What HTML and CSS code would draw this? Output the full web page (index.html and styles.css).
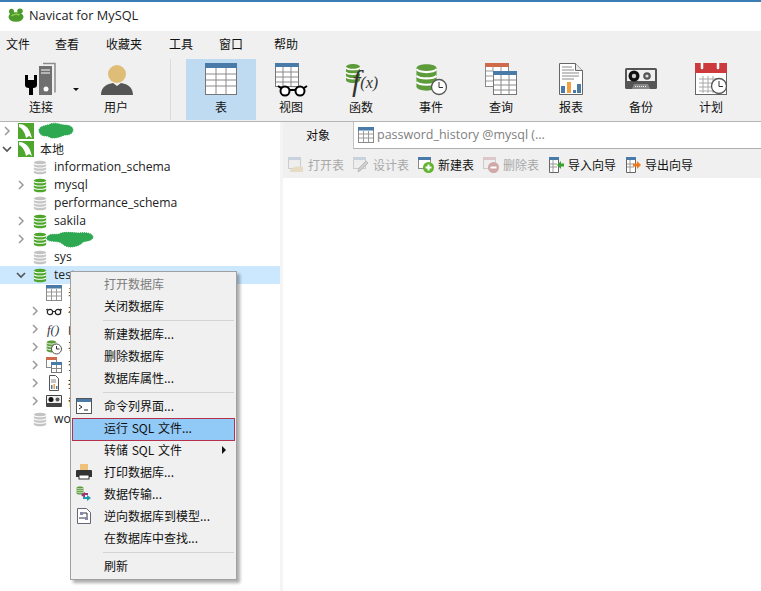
FILE: index.html
```html
<!DOCTYPE html>
<html lang="zh">
<head>
<meta charset="utf-8">
<title>Navicat for MySQL</title>
<link rel="stylesheet" href="styles.css">
</head>
<body>
<svg class="defs" aria-hidden="true">
  <symbol id="db" viewBox="0 0 16 16" preserveAspectRatio="none">
    <path d="M1 3c0-3 14-3 14 0v10c0 3-14 3-14 0z" fill="currentColor"/>
    <path d="M1 3.500c2 2 12 2 14 0M1 7c2 2 12 2 14 0M1 10.500c2 2 12 2 14 0" fill="none" stroke="#fff" stroke-width="1.200"/>
  </symbol>
  <symbol id="conn" viewBox="0 0 16 16">
    <rect width="16" height="16" fill="#4ea72c"/>
    <path d="M1 1c5 0 9 3 11 8l2 6-3-2-3 2C7 10 5 6 1 4z" fill="#fff"/>
  </symbol>
  <symbol id="chev-r" viewBox="0 0 10 10"><path d="M3 1l4 4-4 4" fill="none" stroke="#9a9a9a" stroke-width="1.500"/></symbol>
  <symbol id="chev-d" viewBox="0 0 10 10"><path d="M1 3l4 4 4-4" fill="none" stroke="#555" stroke-width="1.700"/></symbol>
  <symbol id="grid-s" viewBox="0 0 16 16">
    <rect x=".5" y=".5" width="15" height="15" fill="#fff" stroke="#8a8a8a"/>
    <rect width="16" height="3.500" fill="#4a7aa8"/>
    <path d="M1 7h14M1 11h14M5.500 4v11M10.500 4v11" stroke="#9a9a9a"/>
  </symbol>
</svg>

<div class="title-bar">
  <svg class="title-logo" viewBox="0 0 16 14"><ellipse cx="8" cy="9" rx="7.500" ry="4.800" fill="#4c9a2a"/><ellipse cx="3.500" cy="3.500" rx="2.500" ry="2.800" fill="#4c9a2a"/><ellipse cx="12" cy="3" rx="2.800" ry="2.500" fill="#4c9a2a"/><path d="M3.500 8c2-2 6-2 8-1" stroke="#8fd14f" stroke-width="1.500" fill="none"/></svg>
  <span class="title-text">Navicat for MySQL</span>
</div>

<nav class="menu-bar">
  <span>文件</span><span>查看</span><span>收藏夹</span><span>工具</span><span>窗口</span><span>帮助</span>
</nav>

<div class="toolbar">
  <div class="tool">
    <svg class="tool-icon" viewBox="0 0 44 36">
      <path d="M6 14h3v5h6v-5h3v10q0 3-4 3v7h-4v-7q-4 0-4-3z" fill="#000"/>
      <rect x="20" y="5" width="13" height="29" fill="#6f6f6f"/>
      <path d="M24 2.500h12v29" fill="none" stroke="#8a8a8a" stroke-width="1.500"/>
      <path d="M22 9h9M22 12h9" stroke="#fff"/>
      <circle cx="27" cy="28" r="2.500" fill="#fff"/>
    </svg>
    <span>连接</span>
    <i class="caret"></i>
  </div>
  <div class="tool">
    <svg class="tool-icon" viewBox="0 0 44 36">
      <circle cx="23" cy="13" r="9" fill="#e0bd77"/>
      <path d="M7 34c0-9 7-11 12-12l4 3 4-3c5 1 12 3 12 12z" fill="#555"/>
    </svg>
    <span>用户</span>
  </div>
  <div class="tool-sep"></div>
  <div class="tool is-active">
    <svg class="tool-icon" viewBox="0 0 44 36">
      <rect x="6.500" y="2.500" width="31" height="31" fill="#fff" stroke="#777"/>
      <rect x="6" y="2" width="32" height="5" fill="#4a7aa8"/>
      <path d="M7 13h30M7 19h30M7 25h30M17 7v26M27 7v26" stroke="#8a8a8a"/>
    </svg>
    <span>表</span>
  </div>
  <div class="tool">
    <svg class="tool-icon" viewBox="0 0 44 36">
      <rect x="6.500" y="2.500" width="23" height="23" fill="#fff" stroke="#777"/>
      <rect x="6" y="2" width="24" height="4" fill="#4a7aa8"/>
      <path d="M7 11h22M7 16h22M7 21h22M14 6v19M22 6v19" stroke="#8a8a8a"/>
      <circle cx="16" cy="30" r="4.500" fill="#fff" stroke="#000" stroke-width="2"/>
      <circle cx="31" cy="30" r="4.500" fill="#fff" stroke="#000" stroke-width="2"/>
      <path d="M9 25l3 2M20 29h7M35 27l3-2" stroke="#000" stroke-width="2"/>
    </svg>
    <span>视图</span>
  </div>
  <div class="tool">
    <svg class="tool-icon tone-green" viewBox="0 0 44 36">
      <use href="#db" x="6" y="2" width="16" height="21"/>
      <text class="fx" x="13" y="30">f<tspan class="fx-sub" dy="-3">(x)</tspan></text>
    </svg>
    <span>函数</span>
  </div>
  <div class="tool">
    <svg class="tool-icon tone-green" viewBox="0 0 44 36">
      <use href="#db" x="6" y="2" width="23" height="29"/>
      <circle cx="30" cy="26" r="7.500" fill="#fff" stroke="#555" stroke-width="1.300"/>
      <path d="M30 21v5.500h4" fill="none" stroke="#333"/>
    </svg>
    <span>事件</span>
  </div>
  <div class="tool">
    <svg class="tool-icon" viewBox="0 0 44 36">
      <rect x="6.500" y="2.500" width="23" height="23" fill="#fff" stroke="#888"/>
      <rect x="6" y="2" width="24" height="4" fill="#cf6a4c"/>
      <path d="M7 10h7M7 15h7M7 20h7" stroke="#999"/>
      <path d="M14 6v4" stroke="#999"/><path d="M22 6v4" stroke="#999"/>
      <rect x="14.500" y="10.500" width="23" height="23" fill="#fff" stroke="#777"/>
      <rect x="14" y="10" width="24" height="4" fill="#4a7aa8"/>
      <path d="M15 19h22M15 24h22M15 29h22M22 14v19M30 14v19" stroke="#8a8a8a"/>
    </svg>
    <span>查询</span>
  </div>
  <div class="tool">
    <svg class="tool-icon" viewBox="0 0 44 36">
      <path d="M10.500 2.500h16l7 7v24h-23z" fill="#fff" stroke="#666"/>
      <path d="M26.500 2.500v7h7" fill="#e8e8e8" stroke="#666"/>
      <path d="M13 6h10M13 9h12M13 12h17M13 15h17M13 18h12" stroke="#888"/>
      <rect x="12" y="25" width="4" height="7" fill="#4a7aa8"/>
      <rect x="18" y="21" width="4" height="11" fill="#f0a040"/>
      <rect x="24" y="29" width="3" height="3" fill="#4a7aa8"/>
      <rect x="28" y="23" width="4" height="9" fill="#4a7aa8"/>
    </svg>
    <span>报表</span>
  </div>
  <div class="tool">
    <svg class="tool-icon" viewBox="0 0 44 36">
      <rect x="6" y="7" width="32" height="21" rx="1.500" fill="#555"/>
      <rect x="8" y="9" width="28" height="11" fill="#f0f0f0"/>
      <circle cx="15" cy="15" r="5.500" fill="#111"/><circle cx="15" cy="15" r="2.200" fill="#ccc"/>
      <circle cx="28" cy="15" r="3.800" fill="#555"/><circle cx="28" cy="15" r="1.600" fill="#ddd"/>
      <path d="M13 28l2-5h14l2 5z" fill="#888"/>
      <path d="M16 25.500h12" stroke="#eee" stroke-dasharray="1 1"/>
    </svg>
    <span>备份</span>
  </div>
  <div class="tool">
    <svg class="tool-icon" viewBox="0 0 44 36">
      <rect x="6.500" y="2.500" width="31" height="31" fill="#fff" stroke="#666"/>
      <rect x="6" y="2" width="32" height="10" fill="#cd3a3d"/>
      <path d="M13 2v5M29 2v5" stroke="#fff" stroke-width="2.500" stroke-linecap="round"/>
      <path d="M10 18h20M10 22h20M10 26h20M10 30h20M14 15v17M19 15v17M24 15v17" stroke="#a8a8a8"/>
      <circle cx="30" cy="25" r="7.500" fill="#fff" stroke="#555" stroke-width="1.300"/>
      <path d="M30 20v5.500h4" fill="none" stroke="#333"/>
    </svg>
    <span>计划</span>
  </div>
</div>

<div class="workspace">
  <aside class="tree">
    <div class="row lv0">
      <svg class="chev"><use href="#chev-r"/></svg>
      <svg class="ic16"><use href="#conn"/></svg>
      <svg class="scribble scribble-a" viewBox="0 0 36 17"><path d="M1 8c1-5 8-4 11-6 5-2 9 0 14 1 6 0 9 2 9 5s-3 5-8 5c-4 1-6 3-12 3-4 0-4-2-7-2-4 0-7-2-7-6z"/></svg>
    </div>
    <div class="row lv0">
      <svg class="chev"><use href="#chev-d"/></svg>
      <svg class="ic16"><use href="#conn"/></svg>
      <span class="cn">本地</span>
    </div>
    <div class="row lv1 off"><span class="chev-space"></span><svg class="ic14"><use href="#db"/></svg><span class="name">information_schema</span></div>
    <div class="row lv1"><svg class="chev"><use href="#chev-r"/></svg><svg class="ic14"><use href="#db"/></svg><span class="name">mysql</span></div>
    <div class="row lv1 off"><span class="chev-space"></span><svg class="ic14"><use href="#db"/></svg><span class="name">performance_schema</span></div>
    <div class="row lv1"><svg class="chev"><use href="#chev-r"/></svg><svg class="ic14"><use href="#db"/></svg><span class="name">sakila</span></div>
    <div class="row lv1">
      <svg class="chev"><use href="#chev-r"/></svg><svg class="ic14"><use href="#db"/></svg>
      <svg class="scribble scribble-b" viewBox="0 0 48 17"><path d="M1 6c3-4 8-2 12-3 6-3 14-1 20-1 6-1 14 0 14 4s-7 4-10 5c-2 3-8 5-13 5-6 0-7-4-11-5-5-1-14 0-12-5z"/></svg>
    </div>
    <div class="row lv1 off"><span class="chev-space"></span><svg class="ic14"><use href="#db"/></svg><span class="name">sys</span></div>
    <div class="row lv1 is-selected"><svg class="chev"><use href="#chev-d"/></svg><svg class="ic14"><use href="#db"/></svg><span class="name">test</span></div>
    <div class="row lv2"><span class="chev-space"></span><svg class="ic16"><use href="#grid-s"/></svg><span class="cn">表</span></div>
    <div class="row lv2"><svg class="chev"><use href="#chev-r"/></svg>
      <svg class="ic16" viewBox="0 0 16 16"><circle cx="4" cy="9" r="2.700" fill="none" stroke="#222" stroke-width="1.200"/><circle cx="12" cy="9" r="2.700" fill="none" stroke="#222" stroke-width="1.200"/><path d="M6.500 8.500h3M0 7l2-1M16 7l-2-1" stroke="#222"/></svg>
      <span class="cn">视图</span></div>
    <div class="row lv2"><svg class="chev"><use href="#chev-r"/></svg>
      <svg class="ic16" viewBox="0 0 16 16"><text class="fx-s" x="1" y="13">f()</text></svg>
      <span class="cn">函数</span></div>
    <div class="row lv2"><svg class="chev"><use href="#chev-r"/></svg>
      <svg class="ic16 tone-green" viewBox="0 0 16 16"><use href="#db" x="0" y="1" width="11" height="13"/><circle cx="10.500" cy="10" r="5" fill="#fff" stroke="#555"/><path d="M10.500 7v3h3" fill="none" stroke="#333"/></svg>
      <span class="cn">事件</span></div>
    <div class="row lv2"><svg class="chev"><use href="#chev-r"/></svg>
      <svg class="ic16" viewBox="0 0 16 16"><rect x=".5" y=".5" width="10" height="10" fill="#fff" stroke="#888"/><rect width="11" height="3" fill="#cf6a4c"/><rect x="5.500" y="5.500" width="10" height="10" fill="#fff" stroke="#777"/><rect x="5" y="5" width="11" height="3" fill="#4a7aa8"/><path d="M6 11.500h9M10.500 8v7" stroke="#888"/></svg>
      <span class="cn">查询</span></div>
    <div class="row lv2"><svg class="chev"><use href="#chev-r"/></svg>
      <svg class="ic16" viewBox="0 0 16 16"><path d="M3.500.5h6l3 3v12h-9z" fill="#fff" stroke="#555"/><path d="M5 5h5M5 7h5" stroke="#888"/><rect x="5" y="10" width="1.500" height="4" fill="#4a7aa8"/><rect x="7.500" y="9" width="1.500" height="5" fill="#f0a040"/><rect x="10" y="11" width="1.500" height="3" fill="#4a7aa8"/></svg>
      <span class="cn">报表</span></div>
    <div class="row lv2"><svg class="chev"><use href="#chev-r"/></svg>
      <svg class="ic16" viewBox="0 0 16 16"><rect y="2" width="16" height="12" rx="1" fill="#444"/><rect x="1" y="3" width="14" height="7" fill="#f0f0f0"/><circle cx="5" cy="6.500" r="2.500" fill="#111"/><circle cx="11.500" cy="6.500" r="2" fill="#555"/></svg>
      <span class="cn">备份</span></div>
    <div class="row lv1 off"><span class="chev-space"></span><svg class="ic14"><use href="#db"/></svg><span class="name">world</span></div>
  </aside>

  <main class="panel">
    <div class="tabs">
      <div class="tab-objects">对象</div>
      <div class="tab-doc">
        <svg class="ic16"><use href="#grid-s"/></svg>
        <span>password_history @mysql (...</span>
      </div>
    </div>
    <div class="actions">
      <div class="action is-off">
        <svg class="ic16" viewBox="0 0 16 16"><rect x=".5" y=".5" width="12" height="11" fill="#eee" stroke="#ccc"/><rect width="13" height="3" fill="#c8d2dc"/><path d="M2 14c2-5 8-5 13-4v5H2z" fill="#e6dcc4"/></svg>
        <span>打开表</span>
      </div>
      <div class="action is-off">
        <svg class="ic16" viewBox="0 0 16 16"><rect x=".5" y=".5" width="12" height="11" fill="#eee" stroke="#ccc"/><rect width="13" height="3" fill="#c8d2dc"/><path d="M5 15l1-4 7-7 2 2-7 7z" fill="#cfcfcf" stroke="#bbb"/></svg>
        <span>设计表</span>
      </div>
      <div class="action">
        <svg class="ic16" viewBox="0 0 16 16"><rect x=".5" y=".5" width="12" height="11" fill="#fff" stroke="#888"/><rect width="13" height="3" fill="#4a7aa8"/><circle cx="10.500" cy="10.500" r="5.500" fill="#62b32f"/><path d="M10.500 7.500v6M7.500 10.500h6" stroke="#fff" stroke-width="2"/></svg>
        <span>新建表</span>
      </div>
      <div class="action is-off">
        <svg class="ic16" viewBox="0 0 16 16"><rect x=".5" y=".5" width="12" height="11" fill="#eee" stroke="#ccc"/><rect width="13" height="3" fill="#dcc8c8"/><circle cx="10.500" cy="10.500" r="5.500" fill="#d0a8a8"/><path d="M7.500 10.500h6" stroke="#fff" stroke-width="2"/></svg>
        <span>删除表</span>
      </div>
      <div class="action">
        <svg class="ic16" viewBox="0 0 16 16"><path d="M1.500.5h9v15h-9z" fill="#fff" stroke="#666"/><rect x="1" width="10" height="3" fill="#4a7aa8"/><path d="M2 7h7M2 10h7M5 3v12" stroke="#999"/><path d="M9 8l4-4v2.500h3v3h-3V12z" fill="#3aa030"/></svg>
        <span>导入向导</span>
      </div>
      <div class="action">
        <svg class="ic16" viewBox="0 0 16 16"><path d="M1.500.5h9v15h-9z" fill="#fff" stroke="#666"/><rect x="1" width="10" height="3" fill="#4a7aa8"/><path d="M2 7h7M2 10h7M5 3v12" stroke="#999"/><path d="M16 8l-4-4v2.500H8v3h4V12z" fill="#ee7a1e"/></svg>
        <span>导出向导</span>
      </div>
    </div>
    <div class="canvas"></div>
  </main>
</div>

<div class="context-menu">
  <div class="item is-disabled">打开数据库</div>
  <div class="item">关闭数据库</div>
  <div class="sep"></div>
  <div class="item">新建数据库...</div>
  <div class="item">删除数据库</div>
  <div class="item">数据库属性...</div>
  <div class="sep"></div>
  <div class="item">
    <svg class="item-icon" viewBox="0 0 16 16"><rect x=".5" y=".5" width="15" height="15" fill="#fff" stroke="#555"/><rect x="1" y="1" width="14" height="3" fill="#4a7aa8"/><path d="M3 7l3 2-3 2M8 12h4" fill="none" stroke="#222"/></svg>
    命令列界面...
  </div>
  <div class="item is-hot">运行 SQL 文件...</div>
  <div class="item has-sub">转储 SQL 文件</div>
  <div class="item">
    <svg class="item-icon" viewBox="0 0 16 16"><path d="M4 0h8v6H4z" fill="#eec27a"/><path d="M1 6h14q1 0 1 1v6H0V7q0-1 1-1z" fill="#333"/><rect x="3" y="11" width="10" height="4" fill="#fff" stroke="#333"/></svg>
    打印数据库...
  </div>
  <div class="item">
    <svg class="item-icon tone-green" viewBox="0 0 16 16"><use href="#db" x="0" y="0" width="8" height="9"/><path d="M9 6l-4 3 4 3z" fill="#a0307a"/><path d="M9 8h3" stroke="#a0307a" stroke-width="2"/><path d="M11 9l4 3-4 3z" fill="#1d9bb0"/><path d="M7 12h4" stroke="#1d9bb0" stroke-width="2"/></svg>
    数据传输...
  </div>
  <div class="item">
    <svg class="item-icon" viewBox="0 0 16 16"><path d="M1.500.5h9l4 4v11h-13z" fill="#fff" stroke="#667"/><rect x="4" y="4" width="3" height="3" fill="#88a" /><rect x="9" y="9" width="3" height="3" fill="#88a"/><path d="M3 10h6M7 5h4v4" fill="none" stroke="#334"/></svg>
    逆向数据库到模型...
  </div>
  <div class="item">在数据库中查找...</div>
  <div class="sep"></div>
  <div class="item">刷新</div>
</div>
</body>
</html>
```

FILE: styles.css
```css
* { box-sizing: border-box; }

html, body {
  margin: 0;
  height: 100%;
  overflow: hidden;
}

body {
  position: relative;
  display: flex;
  flex-direction: column;
  background: #fff;
  color: #1a1a1a;
  font: 12px/18px "Noto Sans CJK SC", "Noto Sans", sans-serif;
}

.defs { position: absolute; width: 0; height: 0; }

.title-bar {
  flex: none;
  height: 31px;
  border-top: 2px solid #3b7db5;
  display: flex;
  align-items: center;
  gap: 5px;
  padding: 0 0 3px 8px;
}
.title-logo { width: 16px; height: 14px; }
.title-text {
  font: 12.750px/16px "Open Sans", "Noto Sans", sans-serif;
  color: #222;
}

.menu-bar {
  flex: none;
  height: 24px;
  background: #f0f0f0;
  display: flex;
  align-items: center;
  padding: 2px 0 0 6px;
  color: #111;
}
.menu-bar span:nth-child(2) { margin-left: 25px; }
.menu-bar span:nth-child(3) { margin-left: 27px; }
.menu-bar span:nth-child(4) { margin-left: 27px; }
.menu-bar span:nth-child(5) { margin-left: 26px; }
.menu-bar span:nth-child(6) { margin-left: 31px; }

.toolbar {
  flex: none;
  height: 67px;
  background: #f0f0f0;
  border-bottom: 1px solid #b5b5b5;
  display: flex;
  padding: 4px 0 1px 6px;
}
.tool {
  position: relative;
  width: 70px;
  display: flex;
  flex-direction: column;
  align-items: center;
  padding-top: 2px;
  color: #111;
}
.tool:nth-child(2) { margin-left: 5px; }
.tool span { margin-top: 1px; line-height: 18px; }
.tool-icon { width: 44px; height: 36px; flex: none; }
.tool.is-active { background: #bfdbf2; }
.tone-green { color: #5d9c3a; }
.caret {
  position: absolute;
  right: -3px;
  top: 29px;
  border: 3px solid transparent;
  border-top: 3px solid #111;
  border-bottom: 0;
}
.tool-sep {
  width: 1px;
  margin: 0 15px 0 19px;
  background: #dcdcdc;
}
.fx {
  font: italic 30px "Liberation Serif", serif;
  fill: #333;
}
.fx-sub { font-size: 16px; }
.fx-s {
  font: italic 13px "Liberation Serif", serif;
  fill: #334;
}

.workspace {
  flex: 1;
  min-height: 0;
  display: flex;
  background: #f4f4f4;
}

.tree {
  flex: none;
  width: 280px;
  font: 12.200px/18px "Open Sans", "Noto Sans", sans-serif;
  color: #222;
  background: #fff;
}
.row {
  position: relative;
  height: 18px;
  display: flex;
  align-items: center;
  white-space: nowrap;
}
.row .cn { font: 12px/18px "Noto Sans CJK SC", sans-serif; }
.chev, .chev-space { flex: none; width: 10px; height: 10px; }
.ic16 { flex: none; width: 16px; height: 16px; }
.ic14 { flex: none; width: 14px; height: 15px; color: #4ea72c; }
.lv0 { padding-left: 2px; }
.lv0 .ic16 { margin-left: 6px; }
.lv0 .cn { margin-left: 6px; }
.lv1 { padding-left: 16px; }
.lv1 .ic14 { margin-left: 7px; margin-right: 7px; }
.lv1.off .ic14 { color: #c4c4c4; }
.lv2 { padding-left: 30px; }
.lv2 .ic16 { margin-left: 6px; margin-right: 6px; }
.is-selected { background: #cce8ff; }

.scribble {
  position: absolute;
  fill: #2ea851;
  stroke: #2ea851;
  stroke-dasharray: 1 1;
}
.scribble-a { left: 38px; top: 0; width: 36px; height: 17px; }
.scribble-b { left: 46px; top: 1px; width: 48px; height: 17px; }

.panel {
  flex: 1;
  min-width: 0;
  display: flex;
  flex-direction: column;
  margin-left: 3px;
}
.tabs {
  flex: none;
  height: 27px;
  display: flex;
  background: #f0f0f0;
}
.tab-objects {
  width: 70px;
  text-align: center;
  line-height: 26px;
  color: #111;
}
.tab-doc {
  flex: 1;
  display: flex;
  align-items: center;
  gap: 3px;
  padding-left: 4px;
  background: #fff;
  border-left: 1px solid #c4c4c4;
  border-bottom: 1px solid #b0b0b0;
  font: 12.500px/18px "Open Sans", "Noto Sans", sans-serif;
  color: #808080;
}
.actions {
  flex: none;
  height: 29px;
  background: #f0f0f0;
  display: flex;
  align-items: center;
  gap: 9px;
  padding: 2px 0 0 5px;
}
.action {
  display: flex;
  align-items: center;
  gap: 4px;
  color: #111;
}
.action.is-off { color: #a8a8a8; }
.canvas { flex: 1; background: #fff; }

.context-menu {
  position: absolute;
  left: 70px;
  top: 271px;
  width: 167px;
  height: 309px;
  padding: 1px;
  background: #f0f0f0;
  border: 1px solid #a0a0a0;
  box-shadow: 3px 3px 3px rgba(0, 0, 0, .32);
  color: #111;
}
.item {
  position: relative;
  height: 22px;
  line-height: 22px;
  padding-left: 32px;
  white-space: nowrap;
  word-spacing: 1px;
}
.item.is-disabled { color: #7d7d7d; }
.item.is-hot {
  margin-top: 1px;
  margin-bottom: -2px;
  height: 23px;
  background: #91c9f7;
  border: 1px solid #b5304a;
  padding-left: 31px;
  line-height: 18px;
}
.item.has-sub::after {
  content: "";
  position: absolute;
  right: 9px;
  top: 7px;
  border: 4px solid transparent;
  border-left: 4px solid #111;
  border-right: 0;
}
.item-icon {
  position: absolute;
  left: 4px;
  top: 3px;
  width: 16px;
  height: 16px;
}
.sep {
  height: 1px;
  margin: 3px 1px 2px 31px;
  background: #d4d4d4;
}
```
